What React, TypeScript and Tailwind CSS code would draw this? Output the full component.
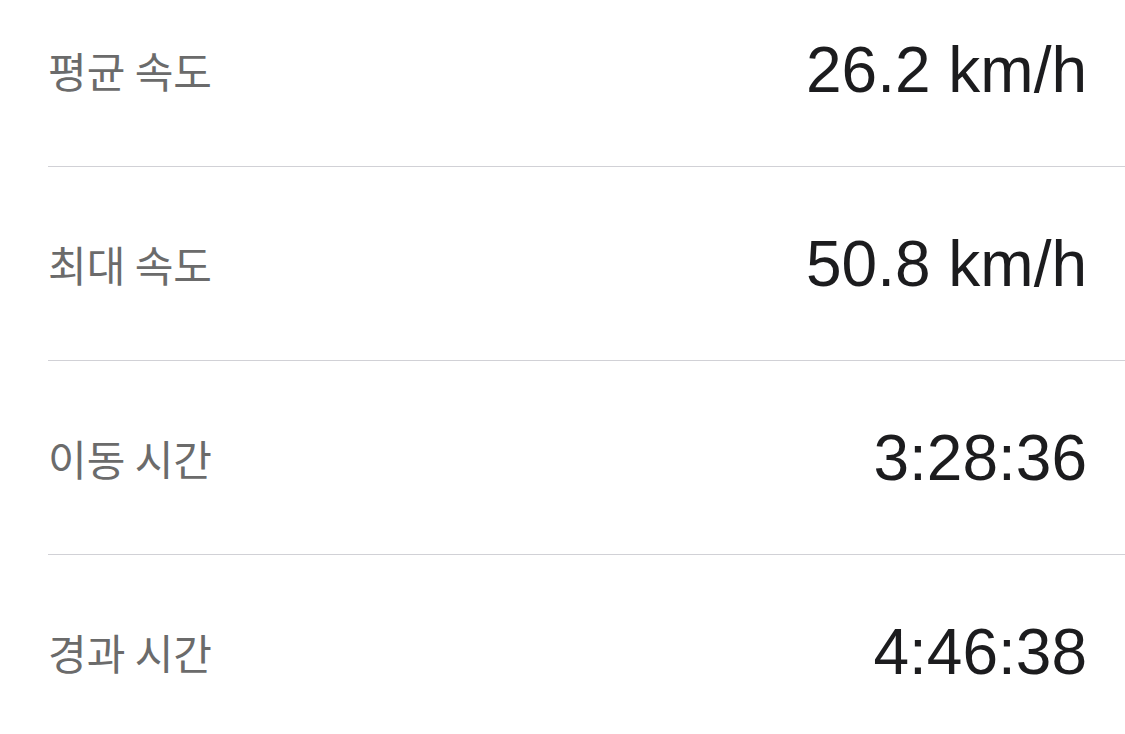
import React from 'react';

const stats = [
  { label: '평균 속도', value: '26.2 km/h' },
  { label: '최대 속도', value: '50.8 km/h' },
  { label: '이동 시간', value: '3:28:36' },
  { label: '경과 시간', value: '4:46:38' },
];

const App = () => {
  return (
    <div className="w-[1125px] h-[734px] bg-white overflow-hidden">
      <div className="-mt-[27px] pl-[48px]">
        {stats.map((s, i) => (
          <div
            key={s.label}
            className={
              'flex items-center justify-between h-[194px] pr-[38px] ' +
              (i < stats.length - 1 ? 'border-b border-[#d1d1d6]' : '')
            }
          >
            <span
              className="text-[42px] leading-none text-[#6b6b6b]"
              style={{ fontFamily: '"Noto Sans CJK KR", "Noto Sans", sans-serif' }}
            >
              {s.label}
            </span>
            <span
              className="text-[64px] leading-none text-[#1c1c1e]"
              style={{ fontFamily: '"Liberation Sans", Arial, sans-serif' }}
            >
              {s.value}
            </span>
          </div>
        ))}
      </div>
    </div>
  );
};

export default App;
